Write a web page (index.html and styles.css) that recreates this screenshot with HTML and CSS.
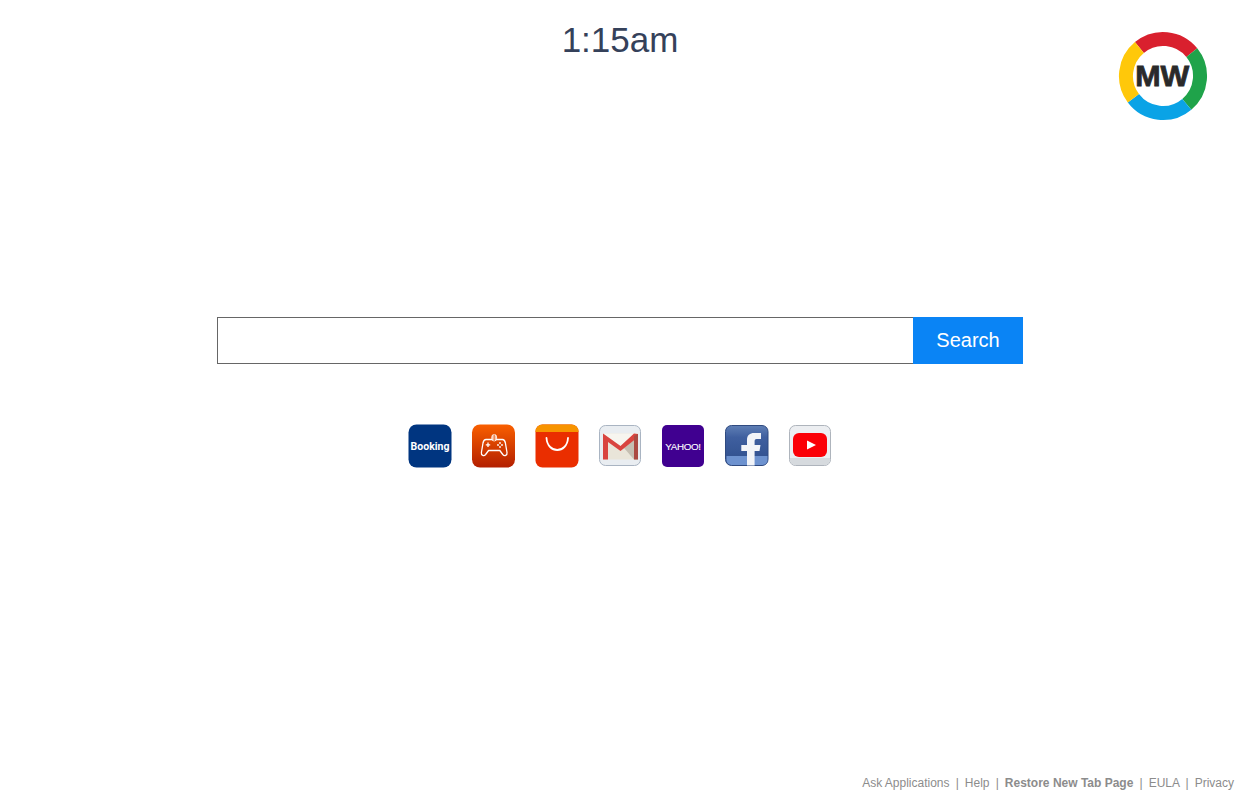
FILE: index.html
```html
<!DOCTYPE html>
<html lang="en">
<head>
    <meta charset="UTF-8">
    <meta name="viewport" content="width=device-width, initial-scale=1.0">
    <title>New Tab</title>
    <link rel="stylesheet" href="styles.css">
</head>
<body>
    <a href="#" class="logo">
        <svg viewBox="0 0 90 90" width="90" height="90">
            <g fill="none" stroke-width="14">
                <path stroke="#d9202e" d="M21.4 16.5A37 37 0 0 1 73.8 21.7"/>
                <path stroke="#1fa34a" d="M73.8 21.7A37 37 0 0 1 68.8 73.3"/>
                <path stroke="#0aa3e6" d="M68.8 73.3A37 37 0 0 1 15.4 67.3"/>
                <path stroke="#ffc80a" d="M15.4 67.3A37 37 0 0 1 21.4 16.5"/>
            </g>
            <text x="45" y="55" dx="-0.8" textLength="54" lengthAdjust="spacingAndGlyphs" class="logo-text">MW</text>
        </svg>
    </a>

    <div class="clock">1:15am</div>

    <form class="search">
        <input type="text" class="search-input">
        <button type="button" class="search-button">Search</button>
    </form>

    <div class="shortcuts">
        <!-- Booking -->
        <a href="#" class="shortcut">
            <svg viewBox="0 0 44 44">
                <rect x="0.5" y="0.5" width="43" height="43" rx="8" fill="#003580"/>
                <text x="22" y="25.8" class="icon-booking">Booking</text>
            </svg>
        </a>
        <!-- Games -->
        <a href="#" class="shortcut">
            <svg viewBox="0 0 44 44">
                <defs>
                    <linearGradient id="game-bg" x1="0" y1="0" x2="0" y2="1">
                        <stop offset="0" stop-color="#f95f00"/>
                        <stop offset="1" stop-color="#b31f00"/>
                    </linearGradient>
                </defs>
                <rect x="1" y="0.5" width="43" height="43" rx="8" fill="url(#game-bg)"/>
                <path d="M15 15.500H31.500C33.300 15.500 34 17 34.400 19L36 28.500C36.400 31.500 33.500 32.500 31.800 30.500L28.800 26.500H17.600L14.600 30.500C12.900 32.500 10 31.500 10.400 28.500L12 19C12.400 17 13.200 15.500 15 15.500Z" fill="none" stroke="#fff" stroke-width="1.300" stroke-linejoin="round"/>
                <rect x="20.800" y="10.500" width="4.800" height="6.500" rx="2.400" fill="#f7c9b0" stroke="#fff" stroke-width="0.800"/>
                <path d="M23.200 10.500V17" stroke="#e2500f" stroke-width="0.800"/>
                <path d="M14.800 20.800H19.200M17 18.600V23" stroke="#fff" stroke-width="1.300"/>
                <circle cx="29" cy="19" r="0.900" fill="#fff"/>
                <circle cx="31" cy="21" r="0.900" fill="#fff"/>
                <circle cx="27" cy="21" r="0.900" fill="#fff"/>
                <circle cx="29" cy="23" r="0.900" fill="#fff"/>
            </svg>
        </a>
        <!-- AliExpress -->
        <a href="#" class="shortcut">
            <svg viewBox="0 0 44 44">
                <rect x="0.5" y="0.5" width="43" height="43" rx="7" fill="#ea2e00"/>
                <path d="M0.5 8V7.500A7 7 0 0 1 7.500 0.500H36.500A7 7 0 0 1 43.500 7.500V8Z" fill="#f79400"/>
                <path d="M11.500 14C12.500 30 32 30 33 14" fill="none" stroke="#fff" stroke-width="1.800" stroke-linecap="round"/>
            </svg>
        </a>
        <!-- Gmail -->
        <a href="#" class="shortcut">
            <svg viewBox="0 0 44 44">
                <rect x="1.500" y="1.500" width="41" height="40" rx="6" fill="#e9edf1" stroke="#a9b4c2"/>
                <path d="M5 9.500H40V35.500H5Z" fill="#e9e5d9"/>
                <path d="M5 9.500H40L22.500 22Z" fill="#f7f5ef"/>
                <path d="M40 12L26 24L36 35.500H40Z" fill="#c5bfb2"/>
                <path d="M5 9.500L22.500 22L36 9.500L40 10V13L22.500 27L10 18V35.500H5Z" fill="#d9443f"/>
                <path d="M36 12V35.500H40V10Z" fill="#ab4a42"/>
            </svg>
        </a>
        <!-- Yahoo -->
        <a href="#" class="shortcut">
            <svg viewBox="0 0 44 44">
                <rect x="1" y="1" width="42" height="42" rx="5" fill="#400090"/>
                <text x="22" y="25.500" class="icon-yahoo">YAHOO!</text>
            </svg>
        </a>
        <!-- Facebook -->
        <a href="#" class="shortcut">
            <svg viewBox="0 0 44 44">
                <defs>
                    <linearGradient id="fb-bg" x1="0" y1="0" x2="0" y2="1">
                        <stop offset="0" stop-color="#5f7fb5"/>
                        <stop offset="0.3" stop-color="#3f5f9f"/>
                        <stop offset="0.75" stop-color="#345492"/>
                    </linearGradient>
                </defs>
                <rect x="0.500" y="1.500" width="42.500" height="40" rx="6" fill="url(#fb-bg)" stroke="#2f4a80"/>
                <path d="M1.500 32H42.500V36A5 5 0 0 1 37.500 41H6.500A5 5 0 0 1 1.500 36Z" fill="#6d92cf"/>
                <path d="M22 41.500V27H16.300V21H22V16C22 11 25 9 29 9H36V15H31.500C30 15 29.600 16 29.600 17.500V21H35.500L34.500 27H29.600V41.500Z" fill="#f2f4f8"/>
            </svg>
        </a>
        <!-- YouTube -->
        <a href="#" class="shortcut">
            <svg viewBox="0 0 44 44">
                <rect x="1.500" y="1.500" width="41" height="40" rx="6" fill="#eceef1" stroke="#aeb4bc"/>
                <path d="M2 34H42V36A5 5 0 0 1 37 41H7A5 5 0 0 1 2 36Z" fill="#d6dade"/>
                <rect x="5" y="9" width="34" height="24" rx="6" fill="#fb0007"/>
                <path d="M19 16.500L28 21L19 25.500Z" fill="#fff"/>
            </svg>
        </a>
    </div>

    <div class="footer">
        <a href="#">Ask Applications</a>
        <span class="sep">|</span>
        <a href="#">Help</a>
        <span class="sep">|</span>
        <a href="#" class="footer-strong">Restore New Tab Page</a>
        <span class="sep">|</span>
        <a href="#">EULA</a>
        <span class="sep">|</span>
        <a href="#">Privacy</a>
    </div>
</body>
</html>
```

FILE: styles.css
```css
* {
    box-sizing: border-box;
}

body {
    font-family: "Liberation Sans", Arial, sans-serif;
    margin: 0;
    height: 100vh;
    overflow: hidden;
    background-color: #fff;
    display: flex;
    flex-direction: column;
    align-items: center;
}

/* Logo */
.logo {
    position: absolute;
    top: 31px;
    left: 1118px;
    width: 90px;
    height: 90px;
}

.logo svg {
    display: block;
}

.logo-text {
    font-family: "Liberation Sans", Arial, sans-serif;
    font-size: 29px;
    font-weight: 700;
    fill: #2a2a2a;
    stroke: #2a2a2a;
    stroke-width: 0.8px;
    text-anchor: middle;
}

/* Clock */
.clock {
    height: 80px;
    line-height: 80px;
    font-size: 35px;
    color: #35415a;
}

/* Search */
.search {
    display: flex;
    width: 806px;
    height: 47px;
    margin-top: 237px;
}

.search-input {
    flex: 1;
    min-width: 0;
    border: 1px solid #666;
    border-right: none;
    outline: none;
    background-color: #fff;
}

.search-button {
    width: 110px;
    border: none;
    background-color: #0a84f5;
    color: #fff;
    font-family: inherit;
    font-size: 20px;
    padding: 0;
}

/* Shortcuts */
.shortcuts {
    display: flex;
    gap: 19.33px;
    margin-top: 60px;
}

.shortcut {
    display: block;
    width: 44px;
    height: 44px;
}

.shortcut svg {
    display: block;
    width: 44px;
    height: 44px;
}

.icon-booking {
    font-family: Roboto, "Liberation Sans", sans-serif;
    font-size: 10.5px;
    font-weight: 700;
    fill: #fff;
    text-anchor: middle;
}

.icon-yahoo {
    font-family: "Liberation Sans", Arial, sans-serif;
    font-size: 9.8px;
    letter-spacing: -0.3px;
    fill: #fff;
    stroke: #fff;
    stroke-width: 0.1px;
    text-anchor: middle;
}

/* Footer */
.footer {
    margin-top: auto;
    align-self: flex-end;
    padding: 0 6px 10px 0;
    font-size: 12px;
    line-height: 14px;
    color: #8c8c8c;
}

.footer a {
    color: #8c8c8c;
    text-decoration: none;
}

.footer .footer-strong {
    font-weight: 700;
}

.sep {
    margin: 0 2.75px;
}
```
